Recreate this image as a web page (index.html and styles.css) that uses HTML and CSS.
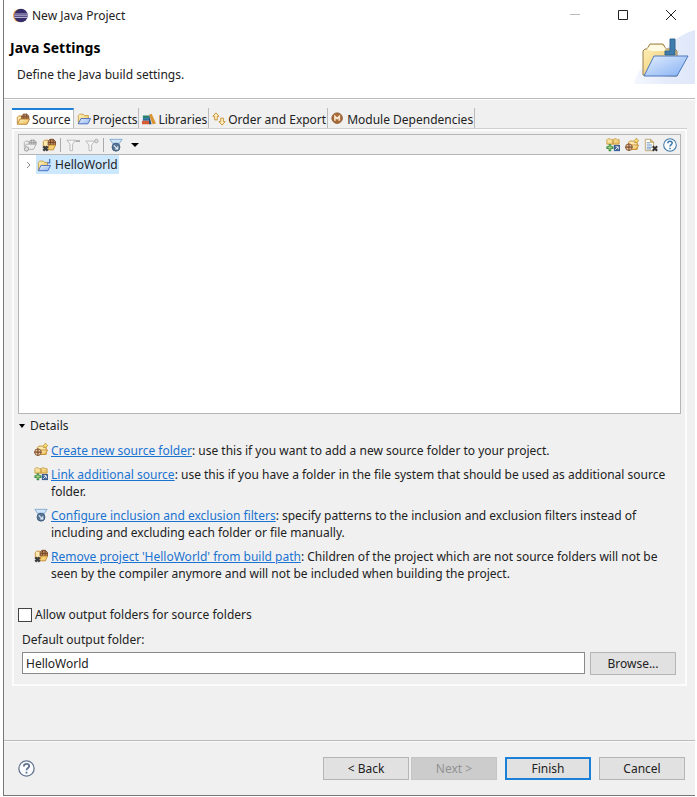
FILE: index.html
```html
<!DOCTYPE html>
<html lang="en">
<head>
    <meta charset="UTF-8">
    <meta name="viewport" content="width=device-width, initial-scale=1.0">
    <title>New Java Project</title>
    <link rel="stylesheet" href="styles.css">
</head>
<body>
    <!-- Shared icons -->
    <svg class="sprite" aria-hidden="true">
        <defs>
            <linearGradient id="gold" x1="0" y1="0" x2="1" y2="1">
                <stop offset="0" stop-color="#fff3c0"/>
                <stop offset="1" stop-color="#e9bd55"/>
            </linearGradient>
            <linearGradient id="blue" x1="0" y1="0" x2="1" y2="1">
                <stop offset="0" stop-color="#e8f1ff"/>
                <stop offset="1" stop-color="#8db4ee"/>
            </linearGradient>
        </defs>
        <symbol id="icon-source" viewBox="0 0 16 16">
            <path d="M1.500 13V6L3 4.500h3L7 6h7v5" fill="#fce9ae" stroke="#c4852f"/>
            <path d="M6.500 8V4.500l2-2h4l2 2V8z" fill="#b98a62" stroke="#7d4b2a"/>
            <path d="M9 2v6M12 2v6M6.500 5.500h8" stroke="#7d4b2a"/>
            <path d="M1.500 14l3-6h11l-3 6z" fill="url(#gold)" stroke="#b97a2c"/>
        </symbol>
        <symbol id="icon-source-off" viewBox="0 0 16 16">
            <path d="M1.500 10V5L3 3.500h3L7 5" fill="#eee" stroke="#aaa"/>
            <path d="M7 7V4.500l2-2h4l2 2V7z" fill="#ddd" stroke="#999"/>
            <path d="M9.500 2v5M12.500 2v5M7 5h8" stroke="#999"/>
            <path d="M2 10l2-3h11l-3 6H7" fill="#eee" stroke="#aaa"/>
            <circle cx="4" cy="12.500" r="2.500" fill="#ddd" stroke="#999"/>
        </symbol>
        <symbol id="icon-remove" viewBox="0 0 16 16">
            <path d="M1.500 10V4L3 2.500h4L8 4h6v6z" fill="#fce9ae" stroke="#c4892f"/>
            <path d="M7 8V4l2-2.500h4L15.500 4v4z" fill="#b98a62" stroke="#6f4022"/>
            <path d="M9.700 1.500V8M12.700 1.500V8M7 5h8.500" stroke="#6f4022"/>
            <path d="M6 13.500L8.500 8h7L13 13.500z" fill="#f5cf74" stroke="#c4892f"/>
            <path d="M1.500 9.500l5 5M6.500 9.500l-5 5" stroke="#3d3d3d" stroke-width="2.800"/>
        </symbol>
        <symbol id="icon-project" viewBox="0 0 16 16">
            <path d="M1.500 13V4l1.500-1.500h4L8.500 4H13v4" fill="url(#gold)" stroke="#c59a42"/>
            <path d="M1.500 13.500l3-6h11l-3 6z" fill="url(#blue)" stroke="#3f65bd"/>
        </symbol>
        <symbol id="icon-java-project" viewBox="0 0 16 16">
            <path d="M1.500 14V5l1.500-1.500h4L8.500 5H12v4" fill="url(#gold)" stroke="#c59a42"/>
            <path d="M1.500 14.500l3-6h11l-3 6z" fill="url(#blue)" stroke="#3f65bd"/>
            <path d="M14.500 1v4.500h-3" fill="none" stroke="#4a79c7" stroke-width="1.500"/>
        </symbol>
        <symbol id="icon-library" viewBox="0 0 16 16">
            <path d="M1 4h7v3H1z" fill="#28836f"/>
            <path d="M1 7h8v3H1z" fill="#2c6f9f"/>
            <path d="M0 10h9v4H0z" fill="#d75b35"/>
            <path d="M8 3l3-1 5 11-4 1z" fill="#d99532"/>
            <path d="M8 3v11h3z" fill="#28527c"/>
        </symbol>
        <symbol id="icon-order" viewBox="0 0 16 16">
            <path d="M4.500 1L1 5h2v4h3V5h2z" fill="#fff2c4" stroke="#c58a2a"/>
            <path d="M11.500 15l3.500-4h-2V7h-3v4H8z" fill="#fff2c4" stroke="#c58a2a"/>
        </symbol>
        <symbol id="icon-module" viewBox="0 0 16 16">
            <circle cx="7" cy="7" r="6" fill="#a96c38" stroke="#8b5225"/>
            <path d="M4.500 10V5L7 7.500 9.500 5v5" fill="none" stroke="#f8e8d2" stroke-width="1.800"/>
        </symbol>
        <symbol id="icon-filter-off" viewBox="0 0 16 16">
            <path d="M1 2.500h10L7.500 7v7.500h-3V7z" fill="#f5f5f5" stroke="#b5b5b5"/>
            <path d="M11 3.500h5" stroke="#aaa" stroke-width="2"/>
        </symbol>
        <symbol id="icon-filter-add-off" viewBox="0 0 16 16">
            <path d="M1 3.500h10L7.500 8v6.500h-3V8z" fill="#f5f5f5" stroke="#b5b5b5"/>
            <circle cx="13" cy="3.500" r="2" fill="#ddd" stroke="#aaa"/>
        </symbol>
        <symbol id="icon-filter" viewBox="0 0 16 16">
            <path d="M1 1.500h14L12 6H4z" fill="#cfe6fa" stroke="#7fa6cb"/>
            <path d="M4 6h8v6H4z" fill="#8fb3d4"/>
            <circle cx="8" cy="10.500" r="4.500" fill="#5c7898" stroke="#3b5877"/>
            <path d="M5.500 8.500l4 4M7 12.500h3v-3" fill="none" stroke="#e8f2fb" stroke-width="1.200"/>
        </symbol>
        <symbol id="icon-link" viewBox="0 0 16 16">
            <path d="M1 7V2l1-1h3l1 1h2v5zM8 7V2l1-1h3l1 1h2v5z" fill="url(#gold)" stroke="#c59a42"/>
            <path d="M4.500 7v8M.500 11h8" stroke="#3f8d42" stroke-width="3"/>
            <path d="M4.500 8.500v5M2 11h5" stroke="#b4dc92"/>
            <rect x="9" y="8" width="7" height="7" fill="#3a5f95"/>
            <path d="M10.500 13.500l3-3M11 10h3v3" fill="none" stroke="#fff"/>
        </symbol>
        <symbol id="icon-new-source" viewBox="0 0 16 16">
            <path d="M4 13V5l1.500-1.500H9L10.500 5H14v8z" fill="#fce9ae" stroke="#c4892f"/>
            <path d="M5 13l3-5h7.500L13 13z" fill="url(#gold)" stroke="#c4892f"/>
            <path d="M13 0l1 2 2 1-2 1-1 2-1-2-2-1 2-1z" fill="#ffe36c" stroke="#b98c28" stroke-width=".7"/>
            <circle cx="4.500" cy="10.500" r="3.800" fill="#e6c8a4" stroke="#7d4b2a"/>
            <path d="M4.500 6.500v8M.500 10.500h8" stroke="#7d4b2a" stroke-width="1.300"/>
        </symbol>
        <symbol id="icon-remove-file" viewBox="0 0 16 16">
            <path d="M1.500 1.500h6L11 5v9.500H1.500z" fill="#fffdf2" stroke="#b7a06a"/>
            <path d="M7.500 1.500V5H11z" fill="#e9cf82" stroke="#b7a06a"/>
            <path d="M3 5.500h4M3 8h6M3 10.500h6M3 12.500h5" stroke="#4f83c4"/>
            <path d="M10 9.500l5 5M15 9.500l-5 5" stroke="#333" stroke-width="2.400"/>
        </symbol>
        <symbol id="icon-help" viewBox="0 0 16 16">
            <circle cx="8" cy="8" r="7.200" fill="#fbfcff" stroke="currentColor" stroke-width="1.200"/>
            <path d="M5.500 6c0-3.200 5-3 5-.2C10.500 7.500 8 7.600 8 9.700M8 11v1.800" fill="none" stroke="currentColor" stroke-width="1.700"/>
        </symbol>
    </svg>

    <div class="window">
        <header class="header">
            <div class="title-bar">
                <svg class="app-icon" viewBox="0 0 16 16">
                    <circle cx="7" cy="8" r="7" fill="#f0a14a"/>
                    <circle cx="8.500" cy="8" r="7.300" fill="#352c68"/>
                    <path d="M1.500 6.300h14M1.200 8.200h14.600M1.500 10.100h14" stroke="#b9b4d6" stroke-width="1.100"/>
                </svg>
                <span class="title">New Java Project</span>
                <button class="window-button minimize" aria-label="Minimize">
                    <svg viewBox="0 0 12 12"><path d="M1 5.500h10" stroke="currentColor"/></svg>
                </button>
                <button class="window-button" aria-label="Maximize">
                    <svg viewBox="0 0 12 12"><path d="M1.500 1.500h9v9h-9z" fill="none" stroke="currentColor"/></svg>
                </button>
                <button class="window-button" aria-label="Close">
                    <svg viewBox="0 0 12 12"><path d="M1 1l10 10M11 1L1 11" stroke="currentColor"/></svg>
                </button>
            </div>
            <div class="banner">
                <div class="banner-text">
                    <h1>Java Settings</h1>
                    <p>Define the Java build settings.</p>
                </div>
                <svg class="banner-image" viewBox="0 0 61 54">
                    <defs>
                        <linearGradient id="swoosh" x1="0" y1="0" x2="1" y2="0">
                            <stop offset="0" stop-color="#f4f7fe"/>
                            <stop offset=".5" stop-color="#e6ecfa"/>
                            <stop offset="1" stop-color="#dfe7f9"/>
                        </linearGradient>
                        <linearGradient id="flap" x1="0" y1="0" x2="1" y2="1">
                            <stop offset="0" stop-color="#e3eefe"/>
                            <stop offset="1" stop-color="#84b0f3"/>
                        </linearGradient>
                    </defs>
                    <path d="M0 54C4 36 14 33 26 29 37 10 48 4 61 0v54z" fill="url(#swoosh)"/>
                    <path d="M9 45V21l2-2h2l3-5h13l3 5h9l2 2v25z" fill="url(#gold)" stroke="#9a7d4c"/>
                    <path d="M13 19l4-4h11l4 4-3 2H17z" fill="#fffbe2"/>
                    <path d="M36 9h5v16h-10v-4h5z" fill="#3d7cac" stroke="#2f658f"/>
                    <path d="M10 46l10-20h34L43 46z" fill="url(#flap)" stroke="#4d78bd"/>
                </svg>
            </div>
        </header>

        <main class="content">
            <nav class="tabs">
                <button class="tab active"><svg class="icon"><use href="#icon-source"/></svg>Source</button>
                <button class="tab"><svg class="icon"><use href="#icon-project"/></svg>Projects</button>
                <button class="tab"><svg class="icon"><use href="#icon-library"/></svg>Libraries</button>
                <button class="tab"><svg class="icon"><use href="#icon-order"/></svg>Order and Export</button>
                <button class="tab"><svg class="icon"><use href="#icon-module"/></svg>Module Dependencies</button>
            </nav>

            <section class="panel">
                <div class="tree-box">
                    <div class="toolbar">
                        <button class="tool" aria-label="Add project to build path" disabled><svg class="icon"><use href="#icon-source-off"/></svg></button>
                        <button class="tool" aria-label="Remove project from build path"><svg class="icon"><use href="#icon-remove"/></svg></button>
                        <span class="divider"></span>
                        <button class="tool" aria-label="Exclude" disabled><svg class="icon"><use href="#icon-filter-off"/></svg></button>
                        <button class="tool" aria-label="Include" disabled><svg class="icon"><use href="#icon-filter-add-off"/></svg></button>
                        <span class="divider"></span>
                        <button class="tool" aria-label="Configure filters"><svg class="icon"><use href="#icon-filter"/></svg></button>
                        <button class="tool" aria-label="More"><svg class="caret" viewBox="0 0 8 4"><path d="M0 0h8L4 4z"/></svg></button>
                        <span class="spacer"></span>
                        <button class="tool" aria-label="Link additional source"><svg class="icon"><use href="#icon-link"/></svg></button>
                        <button class="tool" aria-label="Create new source folder"><svg class="icon"><use href="#icon-new-source"/></svg></button>
                        <button class="tool" aria-label="Delete"><svg class="icon"><use href="#icon-remove-file"/></svg></button>
                        <button class="tool help-tool" aria-label="Help"><svg class="icon"><use href="#icon-help"/></svg></button>
                    </div>
                    <div class="tree">
                        <div class="tree-row">
                            <svg class="expander" viewBox="0 0 5 8"><path d="M1 1l3 3-3 3" fill="none" stroke="#888"/></svg>
                            <span class="tree-item"><svg class="icon"><use href="#icon-java-project"/></svg>HelloWorld</span>
                        </div>
                    </div>
                </div>

                <button class="details-toggle">
                    <svg viewBox="0 0 8 4"><path d="M1 0h6L4 4z"/></svg>Details
                </button>
                <ul class="details">
                    <li>
                        <svg class="icon"><use href="#icon-new-source"/></svg>
                        <p><a href="#">Create new source folder</a>: use this if you want to add a new source folder to your project.</p>
                    </li>
                    <li>
                        <svg class="icon"><use href="#icon-link"/></svg>
                        <p><a href="#">Link additional source</a>: use this if you have a folder in the file system that should be used as additional source folder.</p>
                    </li>
                    <li>
                        <svg class="icon"><use href="#icon-filter"/></svg>
                        <p><a href="#">Configure inclusion and exclusion filters</a>: specify patterns to the inclusion and exclusion filters instead of including and excluding each folder or file manually.</p>
                    </li>
                    <li>
                        <svg class="icon"><use href="#icon-remove"/></svg>
                        <p><a href="#">Remove project 'HelloWorld' from build path</a>: Children of the project which are not source folders will not be seen by the compiler anymore and will not be included when building the project.</p>
                    </li>
                </ul>

                <div class="allow-row">
                    <input type="checkbox" id="allowOutput">
                    <label for="allowOutput">Allow output folders for source folders</label>
                </div>
                <div class="output">
                    <label for="outputFolder">Default output folder:</label>
                    <div class="output-row">
                        <input type="text" id="outputFolder" value="HelloWorld">
                        <button class="button">Browse...</button>
                    </div>
                </div>
            </section>
        </main>

        <footer class="footer">
            <button class="help" aria-label="Help"><svg><use href="#icon-help"/></svg></button>
            <div class="nav-buttons">
                <button class="button">&lt; Back</button>
                <button class="button" disabled>Next &gt;</button>
            </div>
            <button class="button primary">Finish</button>
            <button class="button">Cancel</button>
        </footer>
    </div>
</body>
</html>
```
FILE: styles.css
```css
* {
    box-sizing: border-box;
}
body {
    margin: 0;
    padding: 0 2px 1px 3px;
    min-height: 100vh;
    display: flex;
    background-color: #fff;
    color: #222;
    font-family: 'Noto Sans', 'Open Sans', sans-serif;
    font-size: 12px;
    line-height: 17px;
}
h1, p, ul {
    margin: 0;
    padding: 0;
}
button, input {
    font: inherit;
    color: inherit;
    margin: 0;
}
svg {
    display: block;
    flex: none;
}
.sprite {
    position: absolute;
    width: 0;
    height: 0;
}
.icon {
    width: 14px;
    height: 14px;
}
.window {
    flex: 1;
    min-width: 0;
    display: flex;
    flex-direction: column;
    border-left: 1px solid #777;
    border-bottom: 1px solid #777;
    background-color: #f0f0f0;
}

/* Header */
.header {
    background-color: #fff;
    border-bottom: 1px solid #bbb;
    box-shadow: 0 1px 0 #fff;
}
.title-bar {
    display: flex;
    align-items: center;
    height: 30px;
    padding-left: 9px;
}
.app-icon {
    width: 15px;
    height: 15px;
}
.title {
    flex: 1;
    padding-left: 4px;
}
.window-button {
    display: flex;
    align-items: center;
    justify-content: center;
    width: 48px;
    height: 28px;
    padding: 0;
    border: none;
    background: none;
}
.window-button svg {
    width: 12px;
    height: 12px;
}
.minimize {
    color: #bbb;
}
.banner {
    display: flex;
    justify-content: space-between;
    height: 68px;
}
.banner-text {
    padding: 8px 0 0 6px;
}
.banner h1 {
    margin-bottom: 8px;
    font-size: 14px;
    line-height: 20px;
    color: #000;
}
.banner p {
    padding-left: 7px;
}
.banner-image {
    width: 61px;
    height: 54px;
}

/* Tabs */
.content {
    flex: 1;
    display: flex;
    flex-direction: column;
    padding: 9px 8px 54px;
}
.tabs {
    display: flex;
    border-bottom: 1px solid #d0d0d0;
}
.tab {
    display: flex;
    align-items: center;
    gap: 2px;
    height: 20px;
    padding: 2px 1px 0 3px;
    border: none;
    border-right: 1px solid #bbb;
    background: none;
    white-space: nowrap;
}
.tab.active {
    border-top: 2px solid #1a80d8;
    padding: 0 2px 0 4px;
    background-color: #fff;
}
.panel {
    flex: 1;
    display: flex;
    flex-direction: column;
    padding: 3px 4px 4px;
    border: 2px solid #fcfcfc;
}

/* Source tree */
.tree-box {
    flex: 1;
    display: flex;
    flex-direction: column;
    border: 1px solid #b5b5b5;
    background-color: #fff;
}
.toolbar {
    display: flex;
    align-items: center;
    height: 20px;
    padding: 0 1px;
    border-bottom: 1px solid #b5b5b5;
    background-color: #f0f0f0;
}
.tool {
    display: flex;
    justify-content: center;
    width: 19px;
    padding: 0;
    border: none;
    background: none;
}
.divider {
    width: 1px;
    height: 14px;
    margin: 0 2px;
    background-color: #aaa;
}
.spacer {
    flex: 1;
}
.caret {
    width: 8px;
    height: 4px;
}
.help-tool {
    color: #3c78a8;
}
.tree-row {
    display: flex;
    align-items: center;
    padding-left: 7px;
}
.expander {
    width: 5px;
    height: 8px;
}
.tree-item {
    display: flex;
    align-items: center;
    gap: 4px;
    height: 19px;
    margin-left: 5px;
    padding: 0 1px;
    background-color: #cce8ff;
}

/* Details */
.details-toggle {
    display: flex;
    align-items: center;
    gap: 4px;
    align-self: flex-start;
    margin-top: 3px;
    padding: 0;
    border: none;
    background: none;
}
.details-toggle svg {
    width: 8px;
    height: 4px;
}
.details {
    display: flex;
    flex-direction: column;
    gap: 7px;
    margin: 8px 0 24px;
    padding: 0 0 0 16px;
    list-style: none;
}
.details li {
    display: flex;
    gap: 3px;
}
.details .icon {
    margin-top: 1px;
}
.details a {
    color: #1a73d1;
}

/* Output folder */
.allow-row {
    display: flex;
    align-items: center;
    gap: 3px;
}
.allow-row input {
    appearance: none;
    width: 14px;
    height: 14px;
    border: 1px solid #444;
    background-color: #fff;
}
.allow-row input:checked {
    background-color: #1a80d8;
}
.output {
    padding: 8px 5px 5px 4px;
}
.output label {
    display: block;
    margin-bottom: 4px;
}
.output-row {
    display: flex;
    gap: 5px;
}
.output-row input {
    flex: 1;
    min-width: 0;
    height: 22px;
    padding: 0 3px;
    border: 1px solid #8a8a8a;
    background-color: #fff;
}
.button {
    width: 86px;
    height: 23px;
    padding: 0;
    border: 1px solid #b5b5b5;
    background-color: #e1e1e1;
}
.button:disabled {
    border-color: #c4c4c4;
    background-color: #ccc;
    color: #929292;
}
.primary {
    border: 2px solid #1a80d8;
}

/* Footer */
.footer {
    display: flex;
    align-items: center;
    gap: 8px;
    height: 55px;
    padding: 0 10px 0 14px;
    border-top: 1px solid #bbb;
    box-shadow: inset 0 1px 0 #fafafa;
}
.help {
    margin-right: auto;
    padding: 0;
    border: none;
    background: none;
    color: #60738f;
}
.help svg {
    width: 17px;
    height: 17px;
}
.nav-buttons {
    display: flex;
    gap: 2px;
}
```
